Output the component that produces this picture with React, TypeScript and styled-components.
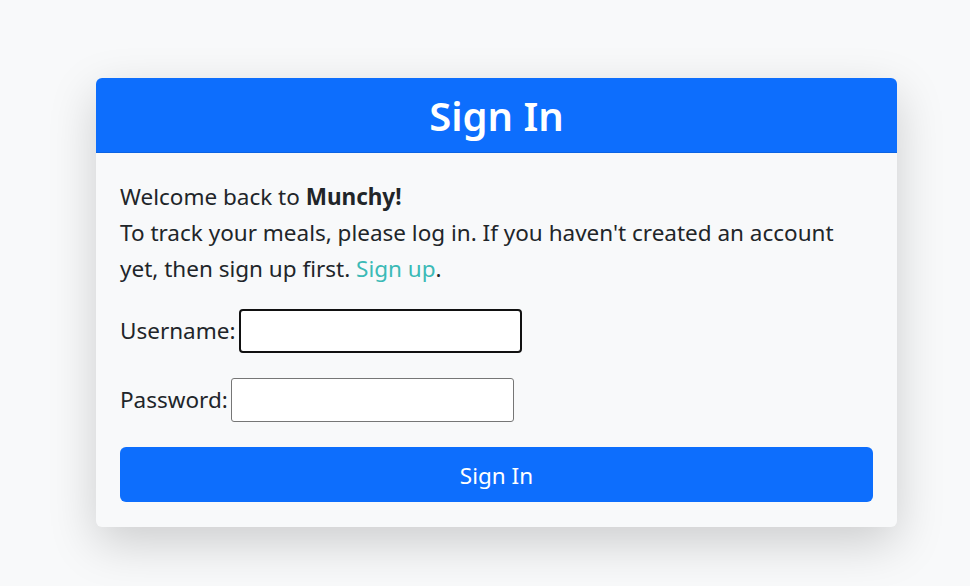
import React from "react";
import styled, { createGlobalStyle } from "styled-components";

const Global = createGlobalStyle`
  html, body { margin: 0; padding: 0; background: #f8f9fa; }
  body { font-family: "Noto Sans", "Open Sans", sans-serif; color: #212529; }
  * { box-sizing: border-box; }
`;

const Page = styled.div`
  width: 970px;
  height: 586px;
  padding: 78px 73px 0 96px;
`;

const Card = styled.div`
  width: 801px;
  background: #f8f9fa;
  border-radius: 6px;
  box-shadow: 0 16px 48px rgba(0, 0, 0, 0.175);
  overflow: hidden;
`;

const Header = styled.div`
  background: #0d6efd;
  border-bottom: 1px solid #0b63e3;
  padding: 14px 16px 12px;
  text-align: center;
`;

const Title = styled.h1`
  margin: 0;
  font-size: 40px;
  line-height: 48px;
  font-weight: 600;
  color: #fff;
`;

const Body = styled.div`
  padding: 26px 24px 25px;
  font-size: 22.5px;
  line-height: 36px;
`;

const Intro = styled.p`
  margin: 0 0 22px;
`;

const Link = styled.a`
  color: #3bbab6;
  text-decoration: none;
`;

const Field = styled.div<{ $first?: boolean }>`
  display: flex;
  align-items: center;
  gap: 3px;
  margin-top: ${(p) => (p.$first ? "0" : "25px")};
`;

const Label = styled.label`
  line-height: 36px;
`;

const Input = styled.input<{ $focused?: boolean }>`
  width: 283px;
  height: 44px;
  background: #fff;
  border: ${(p) => (p.$focused ? "2px solid #111" : "1px solid #767676")};
  border-radius: ${(p) => (p.$focused ? "4px" : "3px")};
  font: inherit;
  padding: 0 4px;
  outline: none;
`;

const Button = styled.button`
  display: block;
  width: 100%;
  height: 55px;
  margin-top: 25px;
  padding-top: 3px;
  background: #0d6efd;
  color: #fff;
  border: none;
  border-radius: 6px;
  font-family: inherit;
  font-size: 22.5px;
  cursor: pointer;
`;

export default function App() {
  return (
    <>
      <Global />
      <Page>
        <Card>
          <Header>
            <Title>Sign In</Title>
          </Header>
          <Body>
            <Intro>
              Welcome back to <strong>Munchy!</strong>
              <br />
              To track your meals, please log in. If you haven't created an
              account yet, then sign up first. <Link href="#">Sign up</Link>.
            </Intro>
            <Field $first>
              <Label htmlFor="username">Username:</Label>
              <Input id="username" type="text" $focused />
            </Field>
            <Field>
              <Label htmlFor="password">Password:</Label>
              <Input id="password" type="password" />
            </Field>
            <Button type="button">Sign In</Button>
          </Body>
        </Card>
      </Page>
    </>
  );
}
